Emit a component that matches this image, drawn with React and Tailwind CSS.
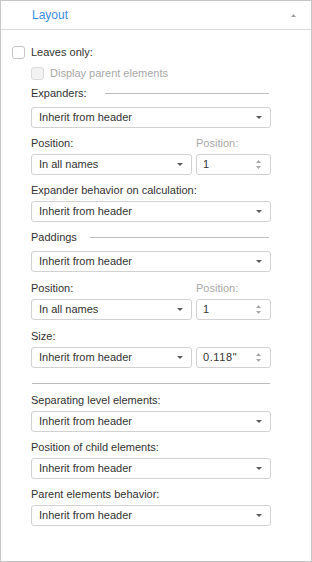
import React from 'react'

const Caret = ({ className = '' }) => (
  <svg width="6" height="3" viewBox="0 0 6 3" className={className}>
    <path d="M0 0 L6 0 L3 3 Z" fill="#5a5a5a" />
  </svg>
)

const Spinner = () => (
  <div className="flex flex-col items-center gap-[3px] mr-[9px]">
    <svg width="5" height="3" viewBox="0 0 5 3">
      <path d="M0 3 L5 3 L2.5 0 Z" fill="#a8a8a8" />
    </svg>
    <svg width="5" height="3" viewBox="0 0 5 3">
      <path d="M0 0 L5 0 L2.5 3 Z" fill="#a8a8a8" />
    </svg>
  </div>
)

const Select = ({ value, className = '' }) => (
  <div className={`h-[21px] flex items-center justify-between border border-[#d2d2d2] rounded-[3px] bg-white pl-[7px] pr-[8px] text-[#333] ${className}`}>
    <span>{value}</span>
    <Caret />
  </div>
)

const NumberInput = ({ value }) => (
  <div className="w-[75px] h-[21px] flex items-center justify-between border border-[#d2d2d2] rounded-[3px] bg-white pl-[6px] text-[#333]">
    <span className="tracking-[0.6px]">{value}</span>
    <Spinner />
  </div>
)

const Label = ({ children, className = '' }) => (
  <div className={`h-[16px] leading-[16px] text-[#333] ${className}`}>{children}</div>
)

const Checkbox = ({ disabled }) => (
  <div
    className={`w-[13px] h-[13px] rounded-[3px] border ${
      disabled ? 'border-[#dadada] bg-[#f2f2f2]' : 'border-[#c4c4c4] bg-white'
    }`}
  />
)

const App = () => {
  return (
    <div
      className="w-[312px] h-[562px] border border-[#c6c6c6] bg-white flex flex-col text-[11px]"
      style={{ fontFamily: '"Liberation Sans", Arial, sans-serif' }}
    >
      {/* Header */}
      <div className="h-[29px] border-b border-[#dcdcdc] flex items-center justify-between pl-[31px] pr-[15px]">
        <span className="text-[#3a8de0] text-[12px]">Layout</span>
        <svg width="5" height="3" viewBox="0 0 5 3">
          <path d="M0 3 L5 3 L2.5 0 Z" fill="#a0a0a0" />
        </svg>
      </div>

      <div className="pt-[14px] pl-[11px]">
        {/* Checkboxes */}
        <div className="h-[16px] flex items-center gap-[6px]">
          <Checkbox />
          <span className="text-[#333]">Leaves only:</span>
        </div>
        <div className="mt-[5px] ml-[19px] h-[16px] flex items-center gap-[6px]">
          <Checkbox disabled />
          <span className="text-[#a8a8a8]">Display parent elements</span>
        </div>

        <div className="ml-[19px] w-[240px]">
          {/* Expanders */}
          <div className="mt-[4px] h-[16px] flex items-center">
            <span className="text-[#333]">Expanders:</span>
            <div className="flex-1 h-px bg-[#bcbcbc] ml-[18px] mr-[2px]" />
          </div>
          <Select value="Inherit from header" className="mt-[6px]" />

          <div className="mt-[7px] flex gap-[4px]">
            <Label className="w-[161px]">Position:</Label>
            <Label className="text-[#a8a8a8]">Position:</Label>
          </div>
          <div className="mt-[3px] flex gap-[4px]">
            <Select value="In all names" className="w-[161px]" />
            <NumberInput value="1" />
          </div>

          <Label className="mt-[7px]">Expander behavior on calculation:</Label>
          <Select value="Inherit from header" className="mt-[3px]" />

          {/* Paddings */}
          <div className="mt-[7px] h-[16px] flex items-center">
            <span className="text-[#333]">Paddings</span>
            <div className="flex-1 h-px bg-[#bcbcbc] ml-[13px] mr-[2px]" />
          </div>
          <Select value="Inherit from header" className="mt-[6px]" />

          <div className="mt-[8px] flex gap-[4px]">
            <Label className="w-[161px]">Position:</Label>
            <Label className="text-[#a8a8a8]">Position:</Label>
          </div>
          <div className="mt-[3px] flex gap-[4px]">
            <Select value="In all names" className="w-[161px]" />
            <NumberInput value="1" />
          </div>

          <Label className="mt-[8px]">Size:</Label>
          <div className="mt-[3px] flex gap-[4px]">
            <Select value="Inherit from header" className="w-[161px]" />
            <NumberInput value={'0.118"'} />
          </div>

          <div className="mt-[15px] h-px bg-[#bcbcbc] mx-[1px]" />

          <Label className="mt-[8px]">Separating level elements:</Label>
          <Select value="Inherit from header" className="mt-[3px]" />

          <Label className="mt-[7px]">Position of child elements:</Label>
          <Select value="Inherit from header" className="mt-[3px]" />

          <Label className="mt-[7px]">Parent elements behavior:</Label>
          <Select value="Inherit from header" className="mt-[3px]" />
        </div>
      </div>
    </div>
  )
}

export default App
